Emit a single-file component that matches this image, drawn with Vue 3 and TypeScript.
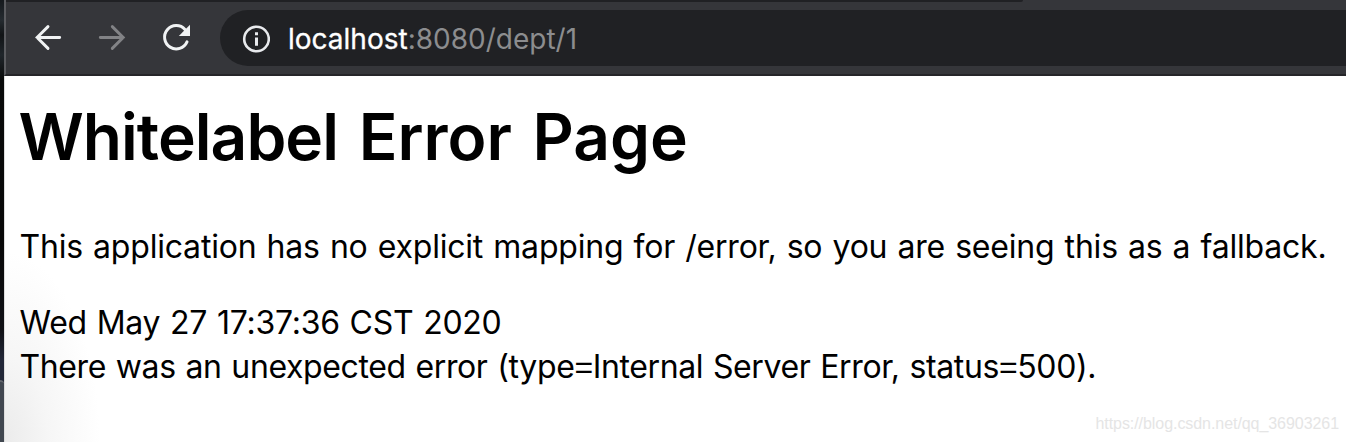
<script setup lang="ts">
const address = { host: 'localhost', rest: ':8080/dept/1' }
const watermark = 'https://blog.csdn.net/qq_36903261'
</script>

<template>
  <div class="screen">
    <aside class="desktop"><div class="dock"></div></aside>
    <section class="browser">
      <header class="toolbar">
        <div class="tabs-edge"></div>
        <nav class="controls">
          <svg class="icon" viewBox="0 0 32 32" fill="none" stroke="#f1f3f4" stroke-width="2.9">
            <path d="M27.7 15.5H5.1M16 4.6L5.1 15.5 16 26.4" stroke-linecap="round" />
          </svg>
          <svg class="icon" viewBox="0 0 32 32" fill="none" stroke="#828386" stroke-width="2.9">
            <path d="M4.3 15.5h22.9M16.3 4.6l10.9 10.9-10.9 10.9" stroke-linecap="round" />
          </svg>
          <svg class="icon" viewBox="0 0 32 32">
            <path d="M27 19.9A11.7 11.7 0 1 1 25 7.4" fill="none" stroke="#f1f3f4" stroke-width="3" stroke-linecap="round" />
            <path d="M30 2.8v11.2H18.8z" fill="#f1f3f4" />
          </svg>
        </nav>
        <div class="omnibox">
          <svg class="info" viewBox="0 0 28 28">
            <circle cx="14.5" cy="14" r="12.3" fill="none" stroke="#e8eaed" stroke-width="2.6" />
            <path d="M13 7.3h3v2.9h-3zM13 12.4h3v8.3h-3z" fill="#e8eaed" />
          </svg>
          <span class="url"><span class="host">{{ address.host }}</span>{{ address.rest }}</span>
        </div>
      </header>
      <main class="page">
        <h1><span class="tight">Whitelabel</span> Error Page</h1>
        <p class="fallback">This application has no explicit mapping for /error, so you are seeing this as a fallback.</p>
        <div class="date">Wed May 27 17:37:36 CST 2020</div>
        <div class="cause">There was an unexpected error (type<span class="equals">=</span>Internal Server Error, status<span class="equals">=</span>500).</div>
      </main>
      <span class="watermark">{{ watermark }}</span>
    </section>
  </div>
</template>

<style>
body { margin: 0; overflow: hidden; }
</style>

<style scoped>
.screen { display: flex; width: 1346px; height: 442px; overflow: hidden; background: #fff; }
.desktop {
  width: 4px; flex: none; display: flex; align-items: flex-end;
  background: linear-gradient(#15191d 0, #252b30 20px, #111416 35px, #20262b 55px, #090a0a 80px, #080808 240px, #101116 330px, #222738 360px);
}
.dock { width: 4px; height: 62px; border-radius: 0 4px 0 0; background: #414750; box-sizing: border-box; border-top: 2px solid #62666c; }
.browser { position: relative; flex: 1; min-width: 0; display: flex; flex-direction: column; }
.toolbar {
  position: relative; display: flex; align-items: center; box-sizing: border-box; flex: none;
  height: 76px; background: #35363a; border-left: 2px solid #5b5c60; border-bottom: 2px solid #252529;
}
.tabs-edge { position: absolute; left: 0; top: 0; width: 1017px; height: 2px; background: #202124; border-radius: 0 0 3px 0; }
.controls { display: flex; gap: 32px; margin: 2px 0 0 26px; width: 188px; }
.icon { width: 32px; height: 32px; flex: none; }
.omnibox {
  display: flex; align-items: center; flex: 1; height: 56px; margin-top: 2px;
  box-sizing: border-box; padding-left: 22px; border-radius: 28px 0 0 28px; background: #202124;
}
.info { width: 28px; height: 28px; margin-top: 1px; }
.url { margin: 1px 0 0 18px; font: 28px/40px Inter, sans-serif; color: #8c8d8f; white-space: nowrap; }
.host { color: #fff; -webkit-text-stroke: 0.3px #fff; }
.page {
  flex: 1; box-sizing: border-box; padding: 16px 0 0 14.5px; border-left: 1px solid #ddd;
  font: 32px/44px Inter, "Liberation Sans", sans-serif; color: #000; white-space: nowrap;
  background: radial-gradient(ellipse 95px 190px at 0 100%, #ebebeb 0, #f6f6f6 45%, #fff 100%);
}
h1 { margin: 0 0 0 -1px; font-size: 64px; line-height: 90px; font-weight: 600; word-spacing: 4.5px; }
.tight { letter-spacing: -0.95px; }
p { margin: 43px 0 32px; }
.fallback { letter-spacing: -0.2px; word-spacing: 1.35px; }
.date { letter-spacing: -0.25px; word-spacing: 1px; }
.cause { letter-spacing: -0.38px; word-spacing: 1.15px; }
.equals { font-family: "Liberation Sans", Arial, sans-serif; line-height: 1; }
.watermark { position: absolute; right: 7px; bottom: 8px; font: 16px/20px "Liberation Sans", Arial, sans-serif; letter-spacing: -0.06px; color: #e5e5e5; }
</style>
